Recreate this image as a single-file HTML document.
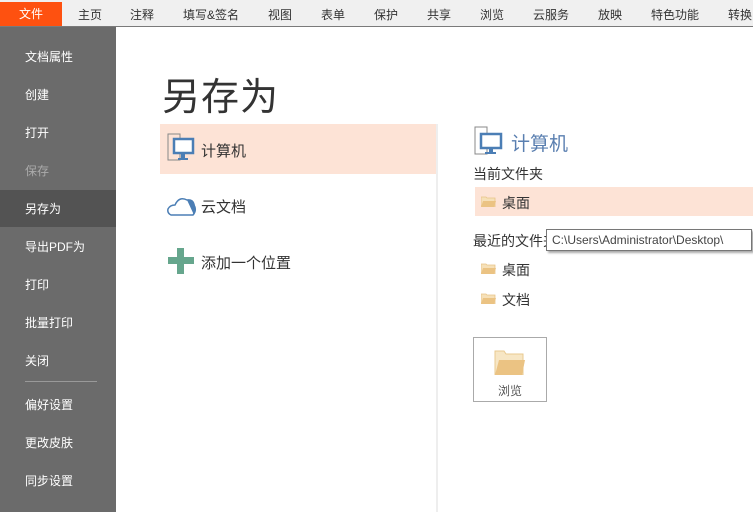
<!DOCTYPE html><html><head><meta charset="utf-8"><style>
*{margin:0;padding:0;box-sizing:border-box}
body{width:753px;height:512px;overflow:hidden;background:#fff;font-family:"Liberation Sans","Noto Sans CJK SC",sans-serif;position:relative;font-size:13px;color:#333}
.top{position:absolute;left:0;top:0;width:753px;height:27px;background:#f0f0f0;border-bottom:1px solid #7a7a7a}
.top span{position:absolute;top:6px;font-size:12px;color:#333}
.file{position:absolute;left:0;top:2px;width:62px;height:24px;background:#fe5110;color:#fff;font-size:12px;text-align:center;line-height:24px}
.side{position:absolute;left:0;top:27px;width:116px;height:485px;background:#6b6b6b}
.side div{position:absolute;left:25px;color:#fff;font-size:12px}
.side .sel{position:absolute;left:0;top:163px;width:116px;height:37px;background:#535353}
.abs{position:absolute}
.fold{position:absolute;width:15px;height:11px}
</style></head><body>
<div class="top">
<div class="file">文件</div>
<span style="left:78px">主页</span><span style="left:130px">注释</span><span style="left:183px">填写&amp;签名</span><span style="left:268px">视图</span><span style="left:321px">表单</span><span style="left:374px">保护</span><span style="left:427px">共享</span><span style="left:480px">浏览</span><span style="left:533px">云服务</span><span style="left:598px">放映</span><span style="left:651px">特色功能</span><span style="left:728px">转换</span>
</div>
<div class="side">
<div class="sel"></div>
<div style="top:21px">文档属性</div>
<div style="top:59px">创建</div>
<div style="top:97px">打开</div>
<div style="top:135px;color:#aaa">保存</div>
<div style="top:173px">另存为</div>
<div style="top:211px">导出PDF为</div>
<div style="top:249px">打印</div>
<div style="top:287px">批量打印</div>
<div style="top:325px">关闭</div>
<div style="top:354px;width:72px;height:1px;background:#999"></div>
<div style="top:369px">偏好设置</div>
<div style="top:407px">更改皮肤</div>
<div style="top:445px">同步设置</div>
</div>
<div class="abs" style="left:162px;top:66px;font-size:38px;color:#333;letter-spacing:1px">另存为</div>
<div class="abs" style="left:436px;top:124px;width:2px;height:388px;background:#eee"></div>
<div class="abs" style="left:160px;top:124px;width:276px;height:50px;background:#fde3d6"></div>
<svg class="abs" style="left:167px;top:133px" width="30" height="30"><rect x="1" y="1" width="12" height="26" fill="none" stroke="#888"/><rect x="7" y="6" width="19" height="14" fill="#fff" stroke="#4b7eb5" stroke-width="2.5"/><rect x="14" y="21" width="4" height="4" fill="#4b7eb5"/><rect x="11" y="25" width="10" height="2" fill="#4b7eb5"/></svg>
<div class="abs" style="left:201px;top:140px;font-size:15px">计算机</div>
<svg class="abs" style="left:167px;top:193px" width="30" height="24"><path d="M8 12 Q12 3 20 7 Q26 6 27 12 Q30 17 26 22 L4 22 Q0 20 1 16 Q3 12 8 12Z" fill="#fff" stroke="#4b7eb5" stroke-width="1.5"/><path d="M20 7 Q27 5 28 13 Q30 18 27 22" fill="#4b7eb5"/></svg>
<div class="abs" style="left:201px;top:196px;font-size:15px">云文档</div>
<svg class="abs" style="left:167px;top:247px" width="28" height="28"><rect x="10" y="1" width="7" height="26" fill="#66a68d"/><rect x="1" y="10" width="26" height="7" fill="#66a68d"/></svg>
<div class="abs" style="left:201px;top:252px;font-size:15px">添加一个位置</div>
<svg class="abs" style="left:474px;top:126px" width="32" height="30"><rect x="1" y="1" width="12" height="27" fill="none" stroke="#888"/><rect x="7" y="8" width="20" height="14" fill="#fff" stroke="#4b7eb5" stroke-width="2.5"/><rect x="15" y="23" width="4" height="3" fill="#4b7eb5"/><rect x="11" y="26" width="11" height="2" fill="#4b7eb5"/></svg>
<div class="abs" style="left:511px;top:129px;font-size:19px;color:#5a7fb0">计算机</div>
<div class="abs" style="left:473px;top:164px;font-size:14px">当前文件夹</div>
<div class="abs" style="left:475px;top:187px;width:278px;height:29px;background:#fde3d6"></div>
<svg class="fold" style="left:481px;top:196px" viewBox="0 0 15 11"><path d="M0 1h5l1 1h8v9H0z" fill="#f6e0b8" stroke="#e8c487" stroke-width=".8"/><path d="M0 11l2-6h13l-2 6z" fill="#ebc383"/></svg>
<div class="abs" style="left:502px;top:193px;font-size:14px">桌面</div>
<div class="abs" style="left:473px;top:231px;font-size:14px">最近的文件夹</div>
<div class="abs" style="left:546px;top:229px;width:206px;height:22px;background:#fff;border:1px solid #777;box-shadow:2px 2px 2px #aaa;font-size:12px;line-height:20px;padding-left:5px;color:#444">C:\Users\Administrator\Desktop\</div>
<svg class="fold" style="left:481px;top:263px" viewBox="0 0 15 11"><path d="M0 1h5l1 1h8v9H0z" fill="#f6e0b8" stroke="#e8c487" stroke-width=".8"/><path d="M0 11l2-6h13l-2 6z" fill="#ebc383"/></svg>
<div class="abs" style="left:502px;top:260px;font-size:14px">桌面</div>
<svg class="fold" style="left:481px;top:293px" viewBox="0 0 15 11"><path d="M0 1h5l1 1h8v9H0z" fill="#f6e0b8" stroke="#e8c487" stroke-width=".8"/><path d="M0 11l2-6h13l-2 6z" fill="#ebc383"/></svg>
<div class="abs" style="left:502px;top:290px;font-size:14px">文档</div>
<div class="abs" style="left:473px;top:337px;width:74px;height:65px;border:1px solid #aaa"></div>
<svg class="abs" style="left:494px;top:350px" width="32" height="25" viewBox="0 0 32 25"><path d="M1 1h9l2 3h17v21H1z" fill="#f7e6c4" stroke="#e9c98f"/><path d="M1 25l4-15h26l-3 15z" fill="#ebc383"/></svg>
<div class="abs" style="left:498px;top:382px;font-size:12px;color:#555">浏览</div>
</body></html>
